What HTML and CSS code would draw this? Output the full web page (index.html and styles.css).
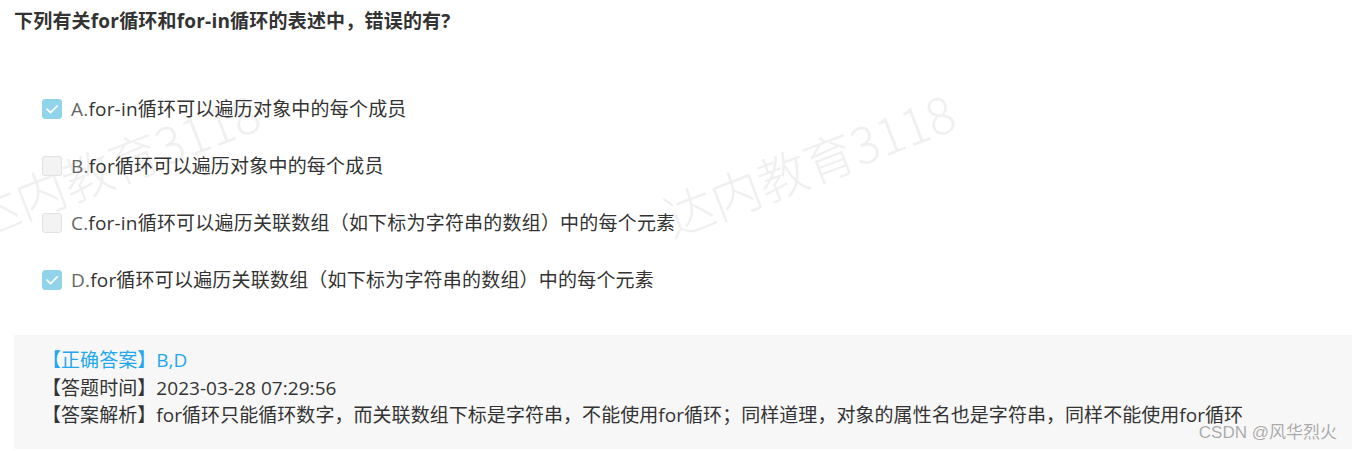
FILE: index.html
```html
<!DOCTYPE html>
<html lang="zh-CN">
<head>
<meta charset="utf-8">
<title>题目</title>
<link rel="stylesheet" href="styles.css">
</head>
<body>
<div class="page">
  <div class="watermark wm1">达内教育3118</div>
  <div class="watermark wm2">达内教育3118</div>
  <div class="watermark wm3">达内教育3118</div>

  <div class="question">
    <h1 class="q-title">下列有关for循环和for-in循环的表述中，错误的有?</h1>
    <ul class="options">
      <li class="option">
        <span class="box checked"><svg viewBox="0 0 20 20" width="20" height="20"><path d="M5 10.2 L8.6 13.6 L15.2 6.8" fill="none" stroke="#fff" stroke-width="1.8" stroke-linecap="round" stroke-linejoin="round"/></svg></span>
        <span class="label"><span class="key">A.</span>for-in循环可以遍历对象中的每个成员</span>
      </li>
      <li class="option">
        <span class="box"></span>
        <span class="label"><span class="key">B.</span>for循环可以遍历对象中的每个成员</span>
      </li>
      <li class="option">
        <span class="box"></span>
        <span class="label"><span class="key">C.</span>for-in循环可以遍历关联数组（如下标为字符串的数组）中的每个元素</span>
      </li>
      <li class="option">
        <span class="box checked"><svg viewBox="0 0 20 20" width="20" height="20"><path d="M5 10.2 L8.6 13.6 L15.2 6.8" fill="none" stroke="#fff" stroke-width="1.8" stroke-linecap="round" stroke-linejoin="round"/></svg></span>
        <span class="label"><span class="key">D.</span>for循环可以遍历关联数组（如下标为字符串的数组）中的每个元素</span>
      </li>
    </ul>

    <div class="answer">
      <p class="line correct">【正确答案】B,D</p>
      <p class="line">【答题时间】2023-03-28 07:29:56</p>
      <p class="line">【答案解析】for循环只能循环数字，而关联数组下标是字符串，不能使用for循环；同样道理，对象的属性名也是字符串，同样不能使用for循环</p>
    </div>
  </div>

  <div class="csdn">CSDN @风华烈火</div>
</div>
</body>
</html>
```

FILE: styles.css
```css
html, body {
  margin: 0;
  padding: 0;
  background: #fff;
}

.page {
  position: relative;
  width: 1352px;
  height: 451px;
  overflow: hidden;
  font-family: "Open Sans", "Noto Sans CJK SC", sans-serif;
  color: #333;
}

.question {
  position: relative;
  z-index: 1;
  padding-left: 14px;
}

.q-title {
  margin: 0;
  box-sizing: border-box;
  padding-top: 9px;
  height: 33px;
  line-height: 24px;
  font-size: 19px;
  font-weight: bold;
  letter-spacing: 0.2px;
  color: #333;
}

.options {
  list-style: none;
  margin: 0;
  padding: 47px 0 0 28px;
}

.option {
  display: flex;
  align-items: center;
  height: 57px;
  gap: 9px;
}

.box {
  flex: none;
  width: 20px;
  height: 20px;
  box-sizing: border-box;
  border-radius: 3px;
  background: #f3f3f3;
  border: 1px solid #e2e2e2;
  display: flex;
}

.box.checked {
  background: #90d4ec;
  border-color: #90d4ec;
}

.box svg {
  margin: -1px;
}

.label {
  font-size: 19px;
  line-height: 24px;
  letter-spacing: 0.2px;
  color: #333;
  white-space: nowrap;
}

.key {
  color: #666;
}

.answer {
  margin-top: 27px;
  background: #f7f7f7;
  padding: 12px 0 19px 28px;
}

.line {
  margin: 0;
  font-size: 19px;
  line-height: 27.5px;
  letter-spacing: 0.05px;
  color: #333;
  white-space: nowrap;
}

.line.correct {
  color: #22a7f0;
}

.watermark {
  position: absolute;
  z-index: 0;
  font-family: "Noto Sans CJK SC", sans-serif;
  font-weight: 300;
  font-size: 50px;
  line-height: 1;
  color: #f0f0f0;
  white-space: nowrap;
  transform: translate(-50%, -50%) rotate(-21deg);
}

.wm1 { left: 113px; top: 163px; }
.wm2 { left: 808px; top: 163px; }
.wm3 { left: 1503px; top: 163px; }

.csdn {
  position: absolute;
  z-index: 2;
  right: 15px;
  bottom: 8px;
  font-family: "Liberation Sans", "Noto Sans CJK SC", sans-serif;
  font-size: 17px;
  line-height: 20px;
  color: #aaa;
  text-shadow: 0 0 1px #fff, 0 0 1px #fff;
}
```
